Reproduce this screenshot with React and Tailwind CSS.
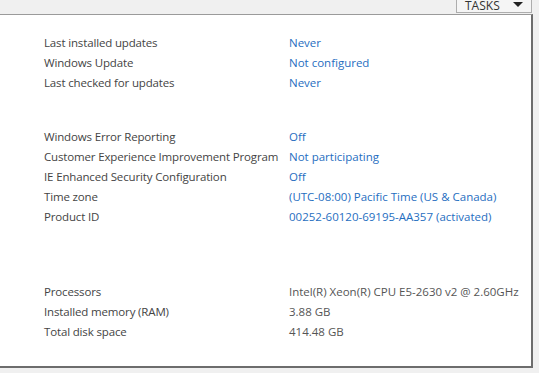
export default function App() {
  const font = { fontFamily: '"Open Sans", "Noto Sans", sans-serif' };
  const Row = ({ label, value, link = true }) => (
    <div className="flex h-[20px] items-center whitespace-nowrap">
      <div className="w-[245px] shrink-0 tracking-[-0.15px] text-[#444444]">{label}</div>
      <div className={link ? "text-[#1f6ebf]" : "text-[#555555]"}>{value}</div>
    </div>
  );
  return (
    <div
      className="relative w-[539px] h-[373px] overflow-hidden bg-[#f0f0f0] text-[11.5px] leading-none"
      style={font}
    >
      <div className="flex h-[14px] justify-end pr-[7px]">
        <div className="mt-[-8px] flex h-[21px] w-[76px] items-end justify-between border border-[#adadad] bg-[#f5f5f5] pb-[0px] pl-[8px] pr-[8px]">
          <span className="text-[12px] leading-none text-[#333333]">TASKS</span>
          <svg width="10" height="6" viewBox="0 0 10 6" className="mb-[4px]">
            <path d="M0 0 H10 L5 5 Z" fill="#222222" />
          </svg>
        </div>
      </div>
      <div className="h-[354px] w-[533px] border-t border-r-2 border-b-2 border-t-[#9a9a9a] border-r-[#6d6d6d] border-b-[#6d6d6d] bg-white pl-[44px] pt-[18px]">
        <Row label="Last installed updates" value="Never" />
        <Row label="Windows Update" value="Not configured" />
        <Row label="Last checked for updates" value="Never" />
        <div className="h-[34px]" />
        <Row label="Windows Error Reporting" value="Off" />
        <Row label="Customer Experience Improvement Program" value="Not participating" />
        <Row label="IE Enhanced Security Configuration" value="Off" />
        <Row label="Time zone" value="(UTC-08:00) Pacific Time (US & Canada)" />
        <Row label="Product ID" value="00252-60120-69195-AA357 (activated)" />
        <div className="h-[55px]" />
        <Row label="Processors" value="Intel(R) Xeon(R) CPU E5-2630 v2 @ 2.60GHz" link={false} />
        <Row label="Installed memory (RAM)" value="3.88 GB" link={false} />
        <Row label="Total disk space" value="414.48 GB" link={false} />
      </div>
    </div>
  );
}
